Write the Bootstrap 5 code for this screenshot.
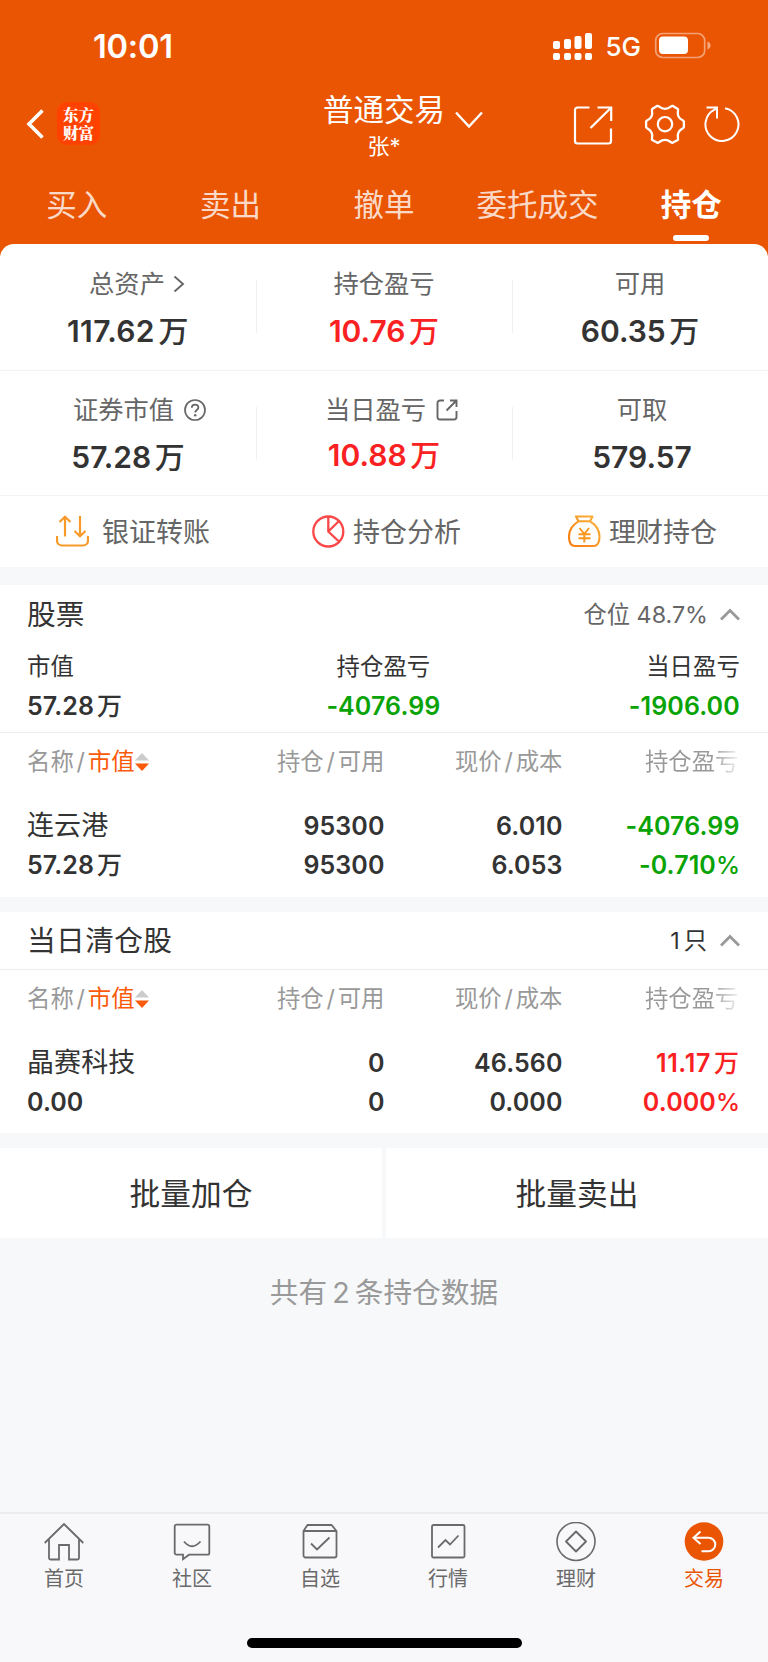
<!DOCTYPE html>
<html lang="zh-CN">
<head>
<meta charset="utf-8">
<meta name="viewport" content="width=device-width, initial-scale=1">
<title>普通交易 - 持仓</title>
<link href="https://cdn.jsdelivr.net/npm/bootstrap@5.3.0/dist/css/bootstrap.min.css" rel="stylesheet">
<style>
  :root { --brand:#ea5504; --ink:#333; --soft:#666; --faint:#999; --up:#fa2122; --down:#09a306; --ground:#f6f8fa; }
  body { font-family: Inter, "Noto Sans CJK SC", sans-serif; background: var(--ground); color: var(--ink); line-height: 1; width: 768px; height: 1662px; overflow: hidden; }
  svg { display: block; flex: none; fill: none; }
  .text-soft { color: var(--soft); } .text-faint { color: var(--faint); }
  .text-up { color: var(--up); } .text-down { color: var(--down); }
  .top-area { background: var(--brand); height: 256px; color: #fff; }
  .status-bar { height: 94px; padding: 0 57px 0 93px; }
  .clock { font-size: 32.6px; font-weight: 600; letter-spacing: -.2px; margin-top: -2px; }
  .net { font-size: 26px; font-weight: 500; }
  .nav-row { height: 76px; padding: 0 28px 0 26px; }
  .app-logo { width: 43px; height: 43px; border-radius: 10px; background: #ff4200; font: 900 15.5px/18px "Noto Serif CJK SC","Noto Sans CJK SC",serif; margin-left: 13px; padding-top: 2.5px; }
  .app-logo div { height: 18px; }
  .title-block { width: 124px; margin-left: 222px; }
  .title-main { font-size: 30.5px; line-height: 37px; height: 38px; white-space: nowrap; }
  .title-sub { font-size: 22px; line-height: 34px; }
  .trade-tabs { height: 74px; width: 768px; }
  .trade-tabs a { height: 70px; color: rgba(255,255,255,.8); font-size: 30.5px; text-decoration: none; }
  .trade-tabs a.active { color: #fff; font-weight: 700; position: relative; }
  .trade-tabs a.active::after { content: ""; position: absolute; bottom: -1px; left: 59px; width: 36px; height: 6px; border-radius: 3px; background: #fff; }
  .sheet { margin-top: -12px; border-radius: 14px 14px 0 0; background: #fff; height: 323px; overflow: hidden; }
  .sum-row { border-bottom: 1px solid #f3f3f4; position: relative; }
  .sum-row > div { width: 256px; position: relative; }
  .sum-row > div + div::before { content: ""; position: absolute; left: 0; top: 36px; height: 53px; width: 1px; background: #f0f0f1; }
  .sum-1 { height: 127px; } .sum-2 { height: 125px; }
  .sum-label { height: 34px; font-size: 25.3px; color: var(--soft); }
  .sum-1 .sum-label { margin-top: 23px; } .sum-2 .sum-label { margin-top: 22px; }
  .sum-value { height: 40px; margin-top: 10px; font-size: 30px; font-weight: 600; }
  .wan { font-weight: 500; margin-left: .12em; }
  .pct { font-weight: 500; font-size: .97em; letter-spacing: -.5px; }
  .act { width: 256px; height: 72px; padding-left: 56px; font-size: 27px; color: var(--soft); }
  .act svg { margin-top: -1px; }
  .block { background: #fff; }
  .block-head { padding: 0 28px 0 27px; font-size: 28.7px; }
  .block-head small { font-size: 23.3px; }
  .stat { padding: 0 28px 0 27px; }
  .stat > div { width: 237.6px; }
  .stat .k { font-size: 23.4px; height: 38px; line-height: 38px; }
  .num { font-size: 25px; font-weight: 600; letter-spacing: .1px; }
  .stat .num { height: 40px; line-height: 40px; }
  .cols { display: grid; grid-template-columns: 1fr 178px 178px 177px; padding: 0 28.5px 0 27px; text-align: right; align-items: center; }
  .cols > :nth-child(4n+1) { text-align: left; }
  .th-row { border-top: 1px solid #ebecee; height: 58px; font-size: 23.4px; color: var(--faint); }
  .sl { margin: 0 2.8px; }
  .sorted { color: #fa5a0a; }
  .fade-end { background: linear-gradient(90deg, var(--faint) 70%, #fff 103%); background-clip: text; -webkit-background-clip: text; color: transparent; padding-right: 1px; justify-self: end; line-height: 34px; }
  .stock { line-height: 38.8px; }
  .stock .nm { font-size: 27px; font-weight: 400; }
  .batch > div { height: 90px; background: #fff; font-size: 30.7px; padding-top: 2px; }
  .total { height: 110px; font-size: 28.7px; color: var(--faint); }
  .bottom-bar { background: #f8f8fb; border-top: 2px solid #ececee; height: 150px; position: fixed; left: 0; bottom: 0; width: 768px; }
  .bottom-bar a { width: 128px; font-size: 20px; color: #6a6a6a; text-decoration: none; padding-top: 8px; }
  .bottom-bar a svg { margin-bottom: 7px; }
  .bottom-bar a.on { color: var(--brand); }
  .home-pill { width: 275px; height: 10px; border-radius: 5px; background: #000; margin: 48.5px auto 0; }
</style>
</head>
<body>
<header class="top-area">
  <div class="status-bar d-flex align-items-center">
    <span class="clock">10:01</span>
    <svg class="ms-auto" width="40" height="28" viewBox="0 0 40 28" style="margin-top:-3px"><g fill="#fff"><rect x="0" y="9" width="7" height="8" rx="2"/><rect x="11" y="7" width="7" height="10" rx="2"/><rect x="21.500" y="4" width="7" height="13" rx="2"/><rect x="32" y="1" width="7" height="16" rx="2"/><rect x="0" y="21" width="7" height="7" rx="2"/><rect x="11" y="21" width="7" height="7" rx="2"/><rect x="21.500" y="21" width="7" height="7" rx="2"/><rect x="32" y="21" width="7" height="7" rx="2"/></g></svg>
    <span class="net" style="margin-left:12px">5G</span>
    <svg width="57" height="28" viewBox="0 0 57 28" style="margin-left:13px;margin-top:-4px"><rect x="1.700" y="2.500" width="49" height="24" rx="7" stroke="#fff" stroke-opacity=".45" stroke-width="1.700"/><rect x="5" y="5.500" width="29" height="17.500" rx="4" fill="#fff"/><path d="M53.500 10.500q3 1.200 3 4t-3 4z" fill="#fff" fill-opacity=".5"/></svg>
  </div>
  <div class="nav-row d-flex">
    <svg width="18" height="32" viewBox="0 0 18 32" style="margin-top:14px"><path d="M16.500 2.500 3 16l13.500 13.500" stroke="#fff" stroke-width="3.600"/></svg>
    <div class="app-logo text-center" style="margin-top:8px"><div>东方</div><div>财富</div></div>
    <div class="title-block text-center" style="margin-top:-3px">
      <div class="title-main">普通交易</div>
      <div class="title-sub">张*</div>
    </div>
    <svg width="28" height="18" viewBox="0 0 28 18" style="margin:17px 0 0 9px"><path d="M1 1.500 14 15.500 27 1.500" stroke="#fff" stroke-width="2.400"/></svg>
    <svg class="ms-auto" width="40" height="40" viewBox="0 0 40 40" style="margin-top:11px"><path d="M16.500 2.500H4.500a2.500 2.500 0 0 0-2.500 2.500v31a2.500 2.500 0 0 0 2.500 2.500h31A2.500 2.500 0 0 0 38 36V23.500M24.500 2.500h13.700v13.500M38 2.700 17.500 23" stroke="#fff" stroke-width="2.200"/></svg>
    <svg width="42" height="42" viewBox="0 0 42 42" style="margin:9px 0 0 31px"><path d="M13.500 2.800C15 2.500 16 5.800 21 5.800S27 2.500 28.500 2.800L33.800 6C35 7.500 32.500 9.500 34.500 13.500S39.500 16.500 39.900 18.500V24C39.500 26 36.500 25.500 34.500 29.500S35 35.500 33.800 37L28.500 39.800C27 40.200 26 36.900 21 36.900S15 40.200 13.500 39.800L8.200 37C7 35.500 9.500 33.500 7.500 29.500S2.500 26 2.100 24V18.500C2.500 16.500 5.500 17.500 7.500 13.500S7 7.500 8.200 6Z" stroke="#fff" stroke-width="2.300" stroke-linejoin="round"/><circle cx="21" cy="21.200" r="7.200" stroke="#fff" stroke-width="2.200"/></svg>
    <svg width="37" height="38" viewBox="0 0 37 38" style="margin:11px 0 0 17px"><path d="M22 3.200A16.500 16.500 0 1 1 11.500 4.700L14 3.300M3.500 2.500H14V13.500" stroke="#fff" stroke-width="2"/></svg>
  </div>
  <nav class="trade-tabs row row-cols-5 g-0 text-center">
    <a class="col d-flex align-items-center justify-content-center" href="#">买入</a>
    <a class="col d-flex align-items-center justify-content-center" href="#">卖出</a>
    <a class="col d-flex align-items-center justify-content-center" href="#">撤单</a>
    <a class="col d-flex align-items-center justify-content-center" href="#">委托成交</a>
    <a class="col d-flex align-items-center justify-content-center active" href="#">持仓</a>
  </nav>
</header>

<main>
  <section class="sheet position-relative">
    <div class="sum-row sum-1 d-flex text-center">
      <div>
        <div class="sum-label d-flex align-items-center justify-content-center" style="padding-left:18px">总资产<svg width="12" height="18" viewBox="0 0 12 18" style="margin-left:8px"><path d="M1.500 1.500 10 9 1.500 16.500" stroke="#666" stroke-width="1.900"/></svg></div>
        <div class="sum-value d-flex align-items-center justify-content-center" style="letter-spacing:.4px">117.62<span class="wan">万</span></div>
      </div>
      <div>
        <div class="sum-label d-flex align-items-center justify-content-center">持仓盈亏</div>
        <div class="sum-value text-up d-flex align-items-center justify-content-center">10.76<span class="wan">万</span></div>
      </div>
      <div>
        <div class="sum-label d-flex align-items-center justify-content-center">可用</div>
        <div class="sum-value d-flex align-items-center justify-content-center">60.35<span class="wan">万</span></div>
      </div>
    </div>
    <div class="sum-row sum-2 d-flex text-center">
      <div>
        <div class="sum-label d-flex align-items-center justify-content-center" style="padding-left:23px">证券市值<svg width="22" height="22" viewBox="0 0 22 22" style="margin-left:10px"><circle cx="11" cy="11" r="10" stroke="#666" stroke-width="1.700"/><path d="M7.800 8.800c0-4.200 6.600-4.200 6.600-.3 0 2.500-3.200 2.500-3.200 5" stroke="#666" stroke-width="1.800"/><circle cx="11.200" cy="16.300" r="1.200" fill="#666"/></svg></div>
        <div class="sum-value d-flex align-items-center justify-content-center">57.28<span class="wan">万</span></div>
      </div>
      <div>
        <div class="sum-label d-flex align-items-center justify-content-center" style="padding-left:15px">当日盈亏<svg width="22" height="22" viewBox="0 0 22 22" style="margin-left:10px"><path d="M8 1.500H4A2.500 2.500 0 0 0 1.500 4v14A2.500 2.500 0 0 0 4 20.500h14a2.500 2.500 0 0 0 2.500-2.500v-6M14 1.500h6.500V8M20 2 10.500 11.500" stroke="#666" stroke-width="1.900"/></svg></div>
        <div class="sum-value text-up d-flex align-items-center justify-content-center" style="padding-bottom:4px">10.88<span class="wan">万</span></div>
      </div>
      <div>
        <div class="sum-label d-flex align-items-center justify-content-center" style="padding-left:4px">可取</div>
        <div class="sum-value d-flex align-items-center justify-content-center" style="padding-left:4px">579.57</div>
      </div>
    </div>
    <div class="d-flex">
      <div class="act d-flex align-items-center"><svg width="33" height="33" viewBox="0 0 33 33" style="margin-right:13px"><path d="M1 21v4.500a5 5 0 0 0 5 5h21a5 5 0 0 0 5-5V21M9 21.500V2M3.500 7 9 1.700 14.500 7M24 1v19.500M18.500 16l5.500 5.200L29.500 16" stroke="#f79a29" stroke-width="2.200"/></svg>银证转账</div>
      <div class="act d-flex align-items-center"><svg width="33" height="33" viewBox="0 0 33 33" style="margin-right:8px"><circle cx="16.300" cy="16.500" r="15" stroke="#fb4747" stroke-width="2.300"/><path d="M16.300 1.500v15L27.500 27M16.300 16.500 26.500 6.500" stroke="#fb4747" stroke-width="2.300"/></svg>持仓分析</div>
      <div class="act d-flex align-items-center"><svg width="33" height="33" viewBox="0 0 33 33" style="margin-right:8px"><defs><linearGradient id="bag" x1="0" y1="1" x2="1" y2="0"><stop stop-color="#f77a0c"/><stop offset="1" stop-color="#fcb43e"/></linearGradient></defs><g stroke="url(#bag)" stroke-width="2.100" stroke-linejoin="round"><path d="M10.500 6.300 8 1.500H24.500L22 6.300H10.500C5 9.500 1 15 1 21.500c0 6.500 2.500 9.500 6 9.500h18.500c3.500 0 6-3 6-9.500 0-6.500-4-12-9.500-15.200"/></g><path d="M11.500 13l4.800 6 4.700-6M10.500 19.200h12M10.500 23.300h12M16.300 19v8.500" stroke="#f8961f" stroke-width="2"/></svg>理财持仓</div>
    </div>
  </section>

  <section class="block" style="margin-top:18px;height:311.500px">
    <div class="block-head d-flex align-items-center justify-content-between" style="height:59px">
      <span style="padding-top:1px">股票</span>
      <small class="text-soft d-flex align-items-center">仓位 48.7%<svg width="20" height="13" viewBox="0 0 20 13" style="margin-left:12px"><path d="M1 11.500 10 2.500l9 9" stroke="#999" stroke-width="2.800"/></svg></small>
    </div>
    <div class="stat d-flex" style="padding-top:4px">
      <div><div class="k">市值</div><div class="num">57.28<span class="wan">万</span></div></div>
      <div class="text-center"><div class="k">持仓盈亏</div><div class="num text-down">-4076.99</div></div>
      <div class="text-end"><div class="k">当日盈亏</div><div class="num text-down">-1906.00</div></div>
    </div>
    <div class="cols th-row" style="margin-top:6px">
      <div class="d-flex align-items-center">名称<span class="sl">/</span><span class="sorted">市值</span><svg width="14" height="20" viewBox="0 0 14 20"><path d="M0 8.500 7 1l7 7.500z" fill="#ccc"/><path d="M0 11.500 7 19l7-7.500z" fill="#fa5a0a"/></svg></div>
      <div>持仓<span class="sl">/</span>可用</div><div>现价<span class="sl">/</span>成本</div><div class="fade-end">持仓盈亏</div>
    </div>
    <div class="cols stock num" style="padding-top:17px">
      <div class="nm">连云港</div><div>95300</div><div>6.010</div><div class="text-down">-4076.99</div>
      <div>57.28<span class="wan">万</span></div><div>95300</div><div>6.053</div><div class="text-down">-0.710<span class="pct">%</span></div>
    </div>
  </section>

  <section class="block" style="margin-top:15.500px;height:221px">
    <div class="block-head d-flex align-items-center justify-content-between" style="height:57px">
      <span style="letter-spacing:.4px;padding-top:1px">当日清仓股</span>
      <small class="d-flex align-items-center">1<span style="margin-left:4px">只</span><svg width="20" height="13" viewBox="0 0 20 13" style="margin-left:13px"><path d="M1 11.500 10 2.500l9 9" stroke="#999" stroke-width="2.800"/></svg></small>
    </div>
    <div class="cols th-row">
      <div class="d-flex align-items-center">名称<span class="sl">/</span><span class="sorted">市值</span><svg width="14" height="20" viewBox="0 0 14 20"><path d="M0 8.500 7 1l7 7.500z" fill="#ccc"/><path d="M0 11.500 7 19l7-7.500z" fill="#fa5a0a"/></svg></div>
      <div>持仓<span class="sl">/</span>可用</div><div>现价<span class="sl">/</span>成本</div><div class="fade-end">持仓盈亏</div>
    </div>
    <div class="cols stock num" style="padding-top:17px">
      <div class="nm">晶赛科技</div><div>0</div><div>46.560</div><div class="text-up" style="letter-spacing:.6px">11.17<span class="wan">万</span></div>
      <div>0.00</div><div>0</div><div>0.000</div><div class="text-up">0.000<span class="pct">%</span></div>
    </div>
  </section>

  <div class="batch d-flex" style="margin-top:15px;gap:4px">
    <div class="flex-fill d-flex align-items-center justify-content-center">批量加仓</div>
    <div class="flex-fill d-flex align-items-center justify-content-center">批量卖出</div>
  </div>
  <div class="total d-flex align-items-center justify-content-center">共有<span style="margin:0 5px">2</span>条持仓数据</div>
</main>

<footer class="bottom-bar">
  <nav class="d-flex">
    <a class="d-flex flex-column align-items-center" href="#"><svg width="40" height="40" viewBox="0 0 40 40"><path d="M.7 21 20 2l19.300 19M5 17.500V36a1.500 1.500 0 0 0 1.500 1.500H15V23h10v14.500h8.500A1.500 1.500 0 0 0 35 36V17.500" stroke="#6a6a6a" stroke-width="1.800"/></svg>首页</a>
    <a class="d-flex flex-column align-items-center" href="#"><svg width="40" height="40" viewBox="0 0 40 40"><path d="M4.500 2.700h31a1.800 1.800 0 0 1 1.800 1.800v26.400a1.800 1.800 0 0 1-1.800 1.800H17l-6 4.500v-4.500H4.500a1.800 1.800 0 0 1-1.800-1.800V4.500a1.800 1.800 0 0 1 1.800-1.800zM12 19.500q7.800 9.500 16.500 0" stroke="#6a6a6a" stroke-width="1.800"/></svg>社区</a>
    <a class="d-flex flex-column align-items-center" href="#"><svg width="40" height="40" viewBox="0 0 40 40"><path d="M3.500 9 7.500 3h24l5 6v24.500a2 2 0 0 1-2 2h-29a2 2 0 0 1-2-2zM3.500 9h33M11 21.500l6 6L29.500 15.500" stroke="#6a6a6a" stroke-width="1.800"/></svg>自选</a>
    <a class="d-flex flex-column align-items-center" href="#"><svg width="40" height="40" viewBox="0 0 40 40"><rect x="4" y="3" width="32.500" height="32.500" rx="1.500" stroke="#6a6a6a" stroke-width="1.800"/><path d="M10 25.500 17.500 18l4.500 4.500 8.500-9" stroke="#6a6a6a" stroke-width="1.800"/></svg>行情</a>
    <a class="d-flex flex-column align-items-center" href="#"><svg width="40" height="40" viewBox="0 0 40 40"><circle cx="20" cy="19.500" r="19" stroke="#6a6a6a" stroke-width="1.600"/><path d="M20 9.500 30 19.500 20 29.500 10 19.500z" stroke="#6a6a6a" stroke-width="1.900" stroke-linejoin="round"/></svg>理财</a>
    <a class="on d-flex flex-column align-items-center" href="#"><svg width="40" height="40" viewBox="0 0 40 40"><circle cx="20" cy="19.500" r="19.300" fill="#ea5504"/><path d="M16.500 9.500 9.500 15.700 16.500 22M9.500 15.700h15a6.800 6.800 0 0 1 0 13.600H17.500" stroke="#fff" stroke-width="2"/></svg>交易</a>
  </nav>
  <div class="home-pill"></div>
</footer>
<script src="https://cdn.jsdelivr.net/npm/bootstrap@5.3.0/dist/js/bootstrap.bundle.min.js"></script>
</body>
</html>
